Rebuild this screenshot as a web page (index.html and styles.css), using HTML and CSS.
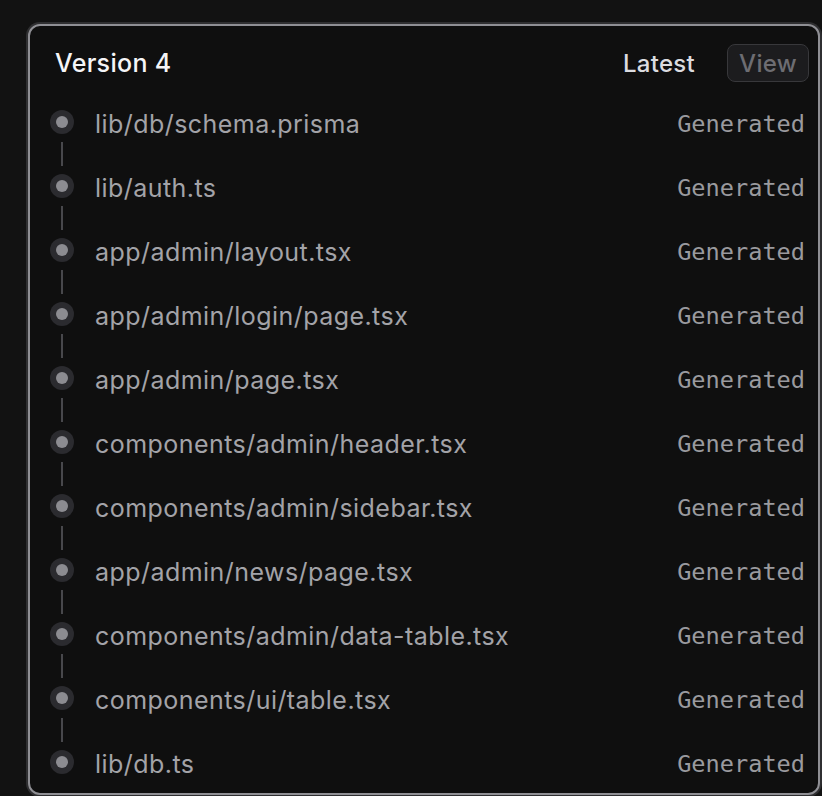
FILE: index.html
```html
<!DOCTYPE html>
<html>
<head>
<meta charset="utf-8">
<link rel="stylesheet" href="styles.css">
</head>
<body>
<div class="card">
  <div class="header">
    <div class="title">Version 4</div>
    <div class="latest">Latest</div>
    <button class="view">View</button>
  </div>
  <ul class="files">
    <li class="row"><span class="dot"></span><span class="name">lib/db/schema.prisma</span><span class="status">Generated</span></li>
    <li class="link"></li>
    <li class="row"><span class="dot"></span><span class="name">lib/auth.ts</span><span class="status">Generated</span></li>
    <li class="link"></li>
    <li class="row"><span class="dot"></span><span class="name">app/admin/layout.tsx</span><span class="status">Generated</span></li>
    <li class="link"></li>
    <li class="row"><span class="dot"></span><span class="name">app/admin/login/page.tsx</span><span class="status">Generated</span></li>
    <li class="link"></li>
    <li class="row"><span class="dot"></span><span class="name">app/admin/page.tsx</span><span class="status">Generated</span></li>
    <li class="link"></li>
    <li class="row"><span class="dot"></span><span class="name">components/admin/header.tsx</span><span class="status">Generated</span></li>
    <li class="link"></li>
    <li class="row"><span class="dot"></span><span class="name">components/admin/sidebar.tsx</span><span class="status">Generated</span></li>
    <li class="link"></li>
    <li class="row"><span class="dot"></span><span class="name">app/admin/news/page.tsx</span><span class="status">Generated</span></li>
    <li class="link"></li>
    <li class="row"><span class="dot"></span><span class="name">components/admin/data-table.tsx</span><span class="status">Generated</span></li>
    <li class="link"></li>
    <li class="row"><span class="dot"></span><span class="name">components/ui/table.tsx</span><span class="status">Generated</span></li>
    <li class="link"></li>
    <li class="row"><span class="dot"></span><span class="name">lib/db.ts</span><span class="status">Generated</span></li>
  </ul>
</div>
</body>
</html>
```
FILE: styles.css
```css
html, body {
  margin: 0;
  padding: 0;
  background: #121212;
  height: 796px;
  overflow: hidden;
}
body {
  font-family: "Inter", "Noto Sans", sans-serif;
}
.card {
  margin: 24px 0 0 28px;
  width: 792px;
  height: 771px;
  box-sizing: border-box;
  border: 2px solid #8f8f94;
  border-radius: 12px;
  box-shadow: 0 0 0 2px #2f2f31;
  background: #0f0f0f;
  overflow: hidden;
}
.header {
  display: flex;
  align-items: center;
  padding: 18px 9px 0 25px;
  height: 38px;
}
.title {
  flex: 1;
  color: #f5f5f7;
  font-size: 25px;
  font-weight: 500;
  letter-spacing: 0.3px;
}
.latest {
  color: #dcdce0;
  font-size: 24px;
  font-weight: 500;
  letter-spacing: 0.3px;
  margin-right: 32px;
}
.view {
  height: 38px;
  width: 82px;
  border: 1px solid #38383b;
  background: #1c1c1e;
  border-radius: 8px;
  color: #6d6d72;
  font-family: "Inter", sans-serif;
  font-size: 24px;
  font-weight: 500;
  letter-spacing: 0.3px;
  padding: 0;
}
.files {
  list-style: none;
  margin: 20px 0 0 0;
  padding: 0 13px 0 20px;
}
.row {
  display: flex;
  align-items: center;
  height: 40px;
}
.dot {
  width: 24px;
  height: 24px;
  border-radius: 50%;
  background: #2b2b2f;
  display: flex;
  align-items: center;
  justify-content: center;
  margin-right: 21px;
  flex: none;
}
.dot::after {
  content: "";
  width: 12px;
  height: 12px;
  border-radius: 50%;
  background: #8c8c91;
}
.name {
  flex: 1;
  color: #a3a3a8;
  font-size: 25px;
  letter-spacing: 0.45px;
  padding-top: 3px;
}
.status {
  color: #9a9a9e;
  font-family: "DejaVu Sans Mono", monospace;
  font-size: 23.6px;
  padding-top: 3px;
}
.link {
  height: 24px;
  width: 2px;
  margin-left: 11px;
  background: #48484c;
}
```
